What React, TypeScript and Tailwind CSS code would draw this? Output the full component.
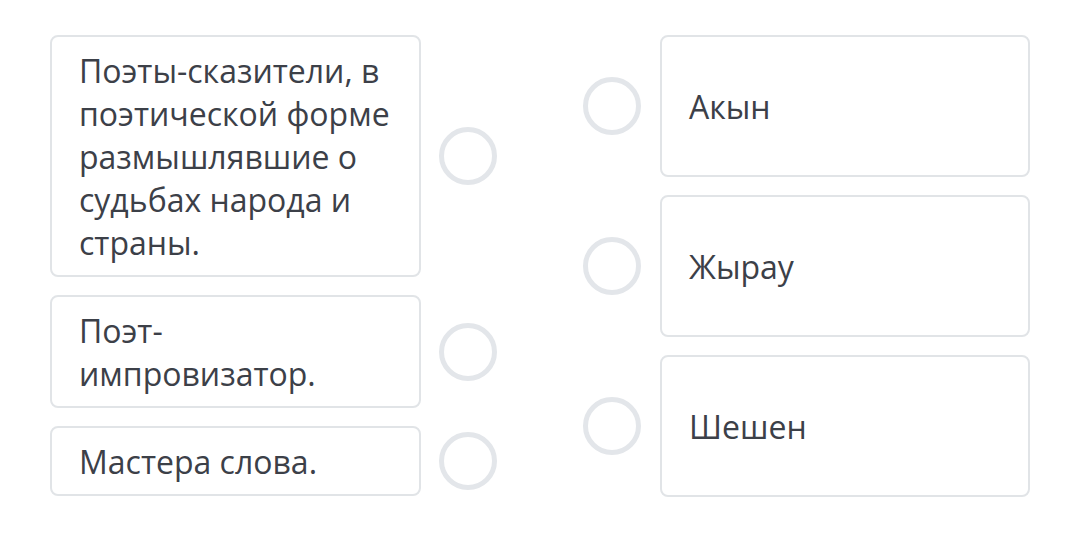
const left = [
  "Поэты-сказители, в поэтической форме размышлявшие о судьбах народа и страны.",
  "Поэт-импровизатор.",
  "Мастера слова.",
];

const right = ["Акын", "Жырау", "Шешен"];

function Circle() {
  return (
    <div className="h-[58px] w-[58px] shrink-0 rounded-full border-[5px] border-[#e3e6ea]" />
  );
}

export default function App() {
  return (
    <div
      className="flex min-h-[541px] w-[1080px] bg-white pl-[50px] pt-[35px] text-[32px] leading-[43px] text-[#3c4048]"
      style={{ fontFamily: '"Open Sans", "Noto Sans", sans-serif' }}
    >
      <div className="flex flex-col gap-[18px]">
        {left.map((t) => (
          <div key={t} className="flex items-center gap-[18px]">
            <div className="w-[371px] rounded-[8px] border-2 border-[#e1e4e7] py-[11.5px] pl-[27px] pr-[28px]">
              {t}
            </div>
            <Circle />
          </div>
        ))}
      </div>
      <div className="ml-[86px] flex flex-col gap-[18px]">
        {right.map((t) => (
          <div key={t} className="flex items-center gap-[19px]">
            <Circle />
            <div className="flex h-[142px] w-[370px] items-center rounded-[8px] border-2 border-[#e1e4e7] pl-[27px]">
              {t}
            </div>
          </div>
        ))}
      </div>
    </div>
  );
}
